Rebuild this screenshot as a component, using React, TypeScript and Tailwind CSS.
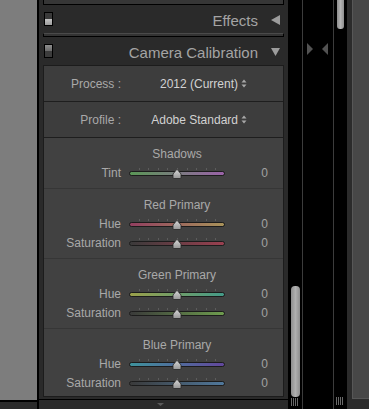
import React from 'react';

interface SliderRow {
  label: string;
  from: string;
  to: string;
}

interface Section {
  title: string;
  rows: SliderRow[];
}

const sections: Section[] = [
  {
    title: "Shadows",
    rows: [{ label: "Tint", from: "#5a9656", to: "#9a62a8" }]
  },
  {
    title: "Red Primary",
    rows: [
      { label: "Hue", from: "#923f60", to: "#a8925a" },
      { label: "Saturation", from: "#3a3a3a", to: "#9a4050" }
    ]
  },
  {
    title: "Green Primary",
    rows: [
      { label: "Hue", from: "#9aa04a", to: "#449a88" },
      { label: "Saturation", from: "#3a3a3a", to: "#6e9c4e" }
    ]
  },
  {
    title: "Blue Primary",
    rows: [
      { label: "Hue", from: "#3e929c", to: "#62479c" },
      { label: "Saturation", from: "#3a3a3a", to: "#50789c" }
    ]
  }
];

const ticks = [1, 2, 3, 4, 5, 6, 7, 8, 9];

const UpDown = () => (
  <svg width="6" height="9" viewBox="0 0 6 9" className="ml-[3px]">
    <path d="M3 0.5 L5.5 3.5 L0.5 3.5 Z" fill="#a8a8a8" />
    <path d="M3 8.5 L5.5 5.5 L0.5 5.5 Z" fill="#a8a8a8" />
  </svg>
);

const Toggle = ({ on }: { on: boolean }) => (
  <div className="w-[9px] h-[14px] border border-black flex flex-col">
    {on ? (
      <>
        <div className="flex-1 bg-[#3a3a3a]" />
        <div className="flex-1 bg-gradient-to-b from-[#c4c4c4] to-[#9c9c9c]" />
      </>
    ) : (
      <>
        <div className="flex-1 bg-gradient-to-b from-[#8e8e8e] to-[#6a6a6a]" />
        <div className="flex-1 bg-[#3c3c3c]" />
      </>
    )}
  </div>
);

const Slider: React.FC<SliderRow> = ({ label, from, to }) => (
  <div className="flex items-center h-[19px]">
    <div className="w-[77px] text-right">{label}</div>
    <div className="relative ml-[8px] w-[96px] h-[19px]">
      {ticks.map((t) => (
        <div
          key={t}
          className="absolute top-[5px] w-px h-[2px] bg-[#5c5c5c]"
          style={{ left: Math.round(t * 9.6) }}
        />
      ))}
      <div
        className="absolute left-0 right-0 top-[8px] h-[5px] rounded-full border border-[#1c1c1c]"
        style={{ background: `linear-gradient(to right, ${from}, ${to})` }}
      />
      <svg width="10" height="10" viewBox="0 0 10 10" className="absolute left-[43px] top-[6px]">
        <defs>
          <linearGradient id="thumb" x1="0" y1="0" x2="0" y2="1">
            <stop offset="0" stopColor="#d6d6d6" />
            <stop offset="1" stopColor="#979797" />
          </linearGradient>
        </defs>
        <path d="M5 0.5 Q5.6 0.5 6.2 1.6 L9 5 L9 8.5 Q9 9.5 8 9.5 L2 9.5 Q1 9.5 1 8.5 L1 5 L3.8 1.6 Q4.4 0.5 5 0.5 Z" fill="url(#thumb)" stroke="#262626" strokeWidth="0.8" />
      </svg>
    </div>
    <div className="w-[43px] text-right text-[#a2a2a2]">0</div>
  </div>
);

const Grip = () => (
  <div className="flex gap-[1px] h-[8px] items-stretch">
    {[0, 1, 2, 3].map((i) => (
      <div key={i} className="w-px bg-[#6a6a6a]" />
    ))}
  </div>
);

export default function App() {
  return (
    <div className="w-[369px] h-[409px] overflow-hidden flex bg-[#2a2a2a] [font-family:'Liberation_Sans',Arial,sans-serif] text-[12px] text-[#a9a9a9]">
      {/* left filmstrip edge */}
      <div className="w-[37px] flex flex-col">
        <div className="h-[400px] bg-[#7d7d7d]" />
        <div className="h-[2px] bg-black" />
        <div className="flex-1 bg-[#2a2a2a]" />
      </div>
      <div className="w-[2px] bg-black" />

      {/* develop panel */}
      <div className="w-[249px] flex flex-col px-[4px] bg-[#2a2a2a]">
        <div className="h-[5px] border-x border-b border-black bg-[#363636]" />

        <div className="h-[28px] flex items-center pl-[1px]">
          <Toggle on />
          <div className="flex-1 text-right text-[15px] text-[#a4a4a4] pr-[13px] pt-[4px]">Effects</div>
          <svg width="9" height="10" viewBox="0 0 9 10" className="mr-[4px] mt-[2px]">
            <path d="M0 5 L9 0 L9 10 Z" fill="#9c9c9c" />
          </svg>
        </div>

        <div className="h-[4px] border border-black border-t-[#4a4a4a] bg-[#333333]" />

        <div className="h-[28px] flex items-center pl-[1px]">
          <Toggle on={false} />
          <div className="flex-1 text-right text-[15px] text-[#a4a4a4] pr-[13px] pt-[4px]">Camera Calibration</div>
          <svg width="9" height="8" viewBox="0 0 9 8" className="mr-[4px] mt-[2px]">
            <path d="M0 0 L9 0 L4.5 8 Z" fill="#9c9c9c" />
          </svg>
        </div>

        <div className="h-[332px] flex flex-col border border-[#1c1c1c] bg-[#414141]">
          <div className="h-[36px] flex items-center border-b border-[#1e1e1e] bg-[#3d3d3d]">
            <div className="w-[77px] text-right">Process :</div>
            <div className="w-[126px] flex items-center justify-end text-[#d2d2d2]">
              2012 (Current)
              <UpDown />
            </div>
          </div>
          <div className="h-[36px] flex items-center border-b border-[#1e1e1e] bg-[#3d3d3d]">
            <div className="w-[77px] text-right">Profile :</div>
            <div className="w-[126px] flex items-center justify-end text-[#d2d2d2]">
              Adobe Standard
              <UpDown />
            </div>
          </div>

          {sections.map((s, i) => (
            <div
              key={s.title}
              className={
                i === 0
                  ? "pt-[6px] pb-[6px]"
                  : i === sections.length - 1
                  ? "flex-1 pt-[6px] border-t border-[#363636]"
                  : "pt-[6px] pb-[6px] border-t border-[#363636]"
              }
            >
              <div className="h-[19px] flex items-center">
                <div className="w-[85px]" />
                <div className="w-[96px] text-center whitespace-nowrap">{s.title}</div>
              </div>
              {s.rows.map((r) => (
                <Slider key={r.label} {...r} />
              ))}
            </div>
          ))}
        </div>

        <div className="h-[2px]" />
        <div className="-mx-[4px] h-px bg-black" />
        <div className="flex-1 flex justify-center pt-[3px] pr-[6px]">
          <svg width="7" height="3" viewBox="0 0 7 3">
            <path d="M0 0 L7 0 L3.5 3 Z" fill="#5a5a5a" />
          </svg>
        </div>
      </div>

      {/* panel scrollbar */}
      <div className="w-[14px] bg-black flex flex-col">
        <div className="h-[286px]" />
        <div className="ml-[3px] w-[9px] h-[111px] rounded-[4px] bg-gradient-to-r from-[#8e8e8e] via-[#b0b0b0] to-[#8e8e8e]" />
        <div className="ml-[3px] mt-[1px]">
          <Grip />
        </div>
      </div>
      <div className="w-px bg-[#3c3c3c]" />

      {/* collapse arrows */}
      <div className="w-[30px] bg-black">
        <div className="flex mt-[43px] pl-[4px] gap-[9px]">
          <svg width="6" height="12" viewBox="0 0 6 12">
            <path d="M0 0 L6 6 L0 12 Z" fill="#525252" />
          </svg>
          <svg width="6" height="12" viewBox="0 0 6 12">
            <path d="M6 0 L0 6 L6 12 Z" fill="#525252" />
          </svg>
        </div>
      </div>
      <div className="w-px bg-[#3c3c3c]" />

      {/* filmstrip scrollbar */}
      <div className="w-[13px] bg-black flex flex-col">
        <div className="ml-[3px] w-[7px] h-[29px] rounded-b-[3px] bg-gradient-to-r from-[#8e8e8e] via-[#b4b4b4] to-[#8e8e8e]" />
        <div className="flex-1" />
        <div className="ml-[2px] mb-[4px]">
          <Grip />
        </div>
      </div>
      <div className="w-[5px] bg-[#2b2b2b]" />
      <div className="flex-1 flex flex-col">
        <div className="h-[399px] bg-[#474747] border-l border-b border-[#575757]" />
        <div className="flex-1 bg-[#2b2b2b]" />
      </div>
    </div>
  );
}
